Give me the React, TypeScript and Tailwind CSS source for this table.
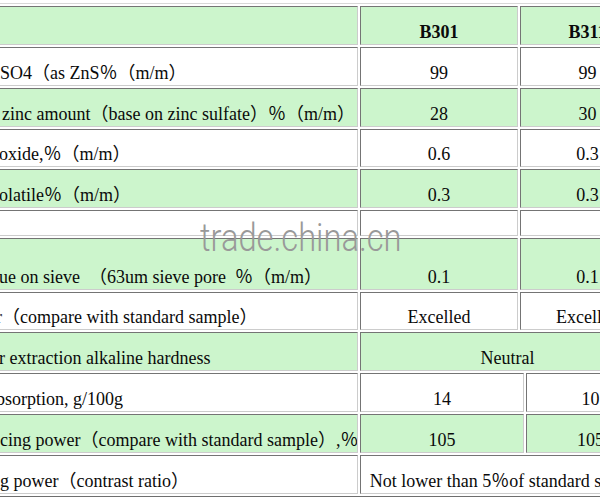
import React from "react";

const serif = { fontFamily: '"Liberation Serif", "Noto Sans CJK SC", serif' };

type CellProps = {
  w: string;
  green?: boolean;
  center?: boolean;
  children?: React.ReactNode;
};

function Cell({ w, green, center, children }: CellProps) {
  return (
    <div
      className={
        "flex h-full items-end overflow-hidden whitespace-nowrap border border-t-[#747474] border-l-[#747474] border-r-[#cccccc] border-b-[#cccccc] pb-[2px] text-[18px] leading-[20px] text-[#0a0a0a] " +
        w +
        (green ? " bg-[#ccf5cc]" : " bg-white") +
        (center ? " justify-center" : " pl-[46px]")
      }
    >
      {children}
    </div>
  );
}

type RowProps = {
  h: string;
  green?: boolean;
  label: React.ReactNode;
  a?: React.ReactNode;
  b?: React.ReactNode;
  span?: React.ReactNode;
  lower?: boolean;
  bold?: boolean;
};

function Row({ h, green, label, a, b, span, lower, bold }: RowProps) {
  return (
    <div className={"flex shrink-0 gap-[2px] " + h}>
      <Cell w="w-[405px] shrink-0" green={green}>
        {label}
      </Cell>
      {span !== undefined ? (
        <Cell w="flex-1" green={green} center>
          {span}
        </Cell>
      ) : (
        <>
          <Cell w={lower ? "w-[164px] shrink-0" : "w-[158px] shrink-0"} green={green} center>
            <span className={bold ? "font-bold" : ""}>{a}</span>
          </Cell>
          <Cell w="flex-1" green={green} center>
            <span className={bold ? "font-bold" : ""}>{b}</span>
          </Cell>
        </>
      )}
    </div>
  );
}

export default function App() {
  return (
    <div className="relative h-[499px] w-[600px] overflow-hidden bg-white" style={serif}>
      <div className="ml-[-50px] mt-[3px] flex w-[708px] flex-col gap-[2px] border border-t-[#d8d8d8] border-l-[#d8d8d8] border-r-[#6e6e6e] border-b-[#6e6e6e] p-[2px]">
        <Row h="h-[39px]" green label={<span></span>} a="B301" b="B311" bold />
        <Row h="h-[39px]" label={<span className="ml-[0px]">SO4（as ZnS％（m/m）</span>} a="99" b="99" />
        <Row
          h="h-[39px]"
          green
          label={<span className="ml-[2px]">zinc amount（base on zinc sulfate）％（m/m）</span>}
          a="28"
          b="30"
        />
        <Row h="h-[38px]" label={<span className="ml-[-1px]">oxide,％（m/m）</span>} a="0.6" b="0.3" />
        <Row h="h-[39px]" green label={<span className="ml-[-1px]">olatile％（m/m）</span>} a="0.3" b="0.3" />
        <Row h="h-[26px]" label={<span></span>} a="" b="" />
        <Row
          h="h-[52px]"
          green
          label={<span className="ml-[-1px]">ue on sieve　（63um sieve pore&nbsp;&nbsp;％（m/m）</span>}
          a="0.1"
          b="0.1"
        />
        <Row
          h="h-[38px]"
          label={<span className="ml-[-4px]">r（compare with standard sample）</span>}
          a="Excelled"
          b="Excelled"
        />
        <Row
          h="h-[39px]"
          green
          label={<span className="ml-[-1px]">r extraction alkaline hardness</span>}
          span="Neutral"
        />
        <Row h="h-[39px]" label={<span className="ml-[-4px]">bsorption, g/100g</span>} a="14" b="10" lower />
        <Row
          h="h-[39px]"
          green
          label={<span className="ml-[0px]">cing power（compare with standard sample）,％</span>}
          a="105"
          b="105"
          lower
        />
        <Row
          h="h-[39px]"
          label={<span className="ml-[0px]">g power（contrast ratio）</span>}
          span="Not lower than 5％of standard sample"
        />
      </div>
      <div
        className="pointer-events-none absolute left-[200px] top-[219px] origin-left scale-x-[0.86] text-[38px] font-light leading-[38px] text-[#999999]"
        style={{ fontFamily: 'Roboto, "Liberation Sans", sans-serif' }}
      >
        trade.china.cn
      </div>
    </div>
  );
}
